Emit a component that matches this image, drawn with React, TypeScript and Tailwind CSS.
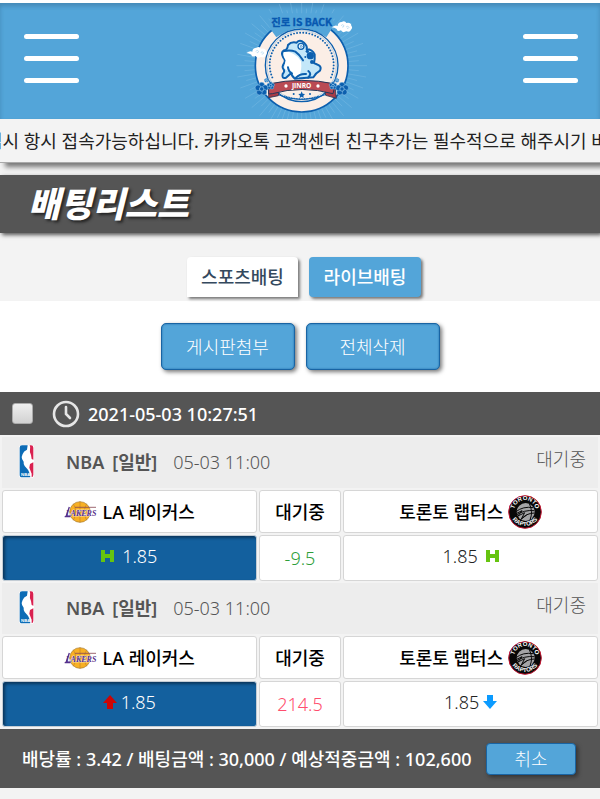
import React from "react";

const RAYS = Array.from({ length: 72 }, (_, i) => (i * Math.PI) / 36);
const DOTS = Array.from({ length: 42 }, (_, i) => Math.PI * 0.87 + (i * Math.PI * 1.26) / 41);

function Flower({ x, y, r }: { x: number; y: number; r: number }) {
  return (
    <g transform={`translate(${x} ${y})`}>
      {[0, 72, 144, 216, 288].map((a) => (
        <circle
          key={a}
          r={r * 0.46}
          cx={Math.sin((a * Math.PI) / 180) * r * 0.6}
          cy={-Math.cos((a * Math.PI) / 180) * r * 0.6}
          fill="#0c5fae"
          stroke="#8cc4e8"
          strokeWidth="1.5"
        />
      ))}
      <circle r={r * 0.35} fill="#0c5fae" stroke="#9fd0ee" strokeWidth="2" />
    </g>
  );
}

function Cloud({ x, y }: { x: number; y: number }) {
  return (
    <g transform={`translate(${x} ${y})`}>
      <path
        d="M0 18 Q12 10 18 14 Q18 3 30 2 Q40 -3 44 5 Q58 2 59 13 Q64 18 58 25 Q55 34 44 30 Q32 36 28 27 Q16 32 15 23 Q8 18 0 18Z"
        fill="#fff"
      />
      <path d="M28 13 q5 -6 9 0 q-1 6 -6 4 M43 17 q6 -6 9 1 q-2 5 -6 3" fill="none" stroke="#8cc4e8" strokeWidth="1.5" />
    </g>
  );
}

function BrandLogo() {
  return (
    <svg width="140" height="116" viewBox="0 9 420 348" role="img" aria-label="진로 IS BACK">
      <g stroke="#8ac4ea" strokeWidth="1.8" opacity="0.6">
        {RAYS.map((a, i) => {
          const r = i % 2 ? 172 : 196;
          return (
            <line
              key={i}
              x1={212 + Math.cos(a) * 135}
              y1={197 + Math.sin(a) * 135}
              x2={212 + Math.cos(a) * r}
              y2={197 + Math.sin(a) * r}
            />
          );
        })}
      </g>
      <circle cx="212" cy="197" r="139" fill="#fbeee6" stroke="#0c5fae" strokeWidth="5" />
      <path d="M116 40H306V80L286 112Q212 58 136 112L116 84Z" fill="#53a5d9" />
      <circle cx="212" cy="196" r="109" fill="#fbeee6" stroke="#0c5fae" strokeWidth="4" />
      <circle cx="212" cy="196" r="104" fill="none" stroke="#7fb4dc" strokeWidth="1.5" />
      {DOTS.map((a, i) => (
        <circle key={i} cx={212 + Math.cos(a) * 96} cy={194 + Math.sin(a) * 96} r="2.9" fill="#0c5fae" />
      ))}
      <text
        x="212"
        y="79"
        fill="#0758b0"
        stroke="#0758b0"
        strokeWidth="1"
        fontSize="31"
        fontWeight="700"
        textAnchor="middle"
        fontFamily="'Liberation Sans Narrow','Noto Sans CJK KR',sans-serif"
      >
        진로 IS BACK
      </text>
      <Cloud x={302} y={64} />
      <Cloud x={46} y={141} />
      <path
        d="M171 135 Q181 124 197 128 Q206 117 219 128 Q230 138 227 148 Q244 148 251 163 Q252 178 249 189 L264 196 Q272 201 267 212 Q253 220 247 232 L191 236 Q183 228 180 220 L165 233 Q151 237 155 222 Q163 213 157 207 Q152 200 159 190 Q165 182 157 173 Q148 158 159 151 Q169 151 171 135Z"
        fill="#c3e7f9"
        stroke="#0c5fae"
        strokeWidth="6"
        strokeLinejoin="round"
      />
      <path d="M160 154 Q154 167 164 181 Q160 196 160 205 Q172 218 183 213 Q186 231 202 233 Q214 214 210 184 Q196 158 160 154Z" fill="#fff" />
      <path
        d="M160 153 Q178 149 193 155 Q205 163 216 181 M171 202 Q173 216 183 220 M195 233 Q208 220 225 222 M231 233 Q244 222 232 213"
        fill="none"
        stroke="#0c5fae"
        strokeWidth="6"
        strokeLinecap="round"
      />
      <circle cx="210" cy="139" r="9" fill="#e8f7fe" stroke="#0c5fae" strokeWidth="4" />
      <path d="M207 139 q4 -5 7 0 q-3 5 -6 2" fill="none" stroke="#0c5fae" strokeWidth="2" />
      <g fill="#0c5fae">
        <circle cx="238" cy="167" r="11" />
        <circle cx="229" cy="154" r="5" />
        <circle cx="243" cy="186" r="6" />
        <circle cx="223" cy="171" r="3" />
      </g>
      <path d="M135 282 Q212 315 289 282" fill="none" stroke="#0c5fae" strokeWidth="3" />
      <path d="M113 256 L113 293 L142 287 L146 256Z M312 256 L316 295 L284 286 L280 256Z" fill="#a93c46" stroke="#26375a" strokeWidth="2.5" />
      <path d="M113 252 Q212 230 313 252 L306 281 Q212 256 124 281 L113 282Z" fill="#ba4a53" stroke="#26375a" strokeWidth="3" />
      <path d="M160 288 Q212 306 264 288" fill="none" stroke="#0c5fae" strokeWidth="4" strokeDasharray="3 2" />
      <g fill="#0c5fae">
        <path d="M212 274 l3 7 7 1 -5 5 1 7 -6 -4 -6 4 1 -7 -5 -5 7 -1z" />
        <circle cx="188" cy="282" r="3" />
        <circle cx="237" cy="282" r="3" />
      </g>
      <text x="212" y="263" fill="#fff" fontSize="20" fontWeight="700" textAnchor="middle" fontFamily="'Open Sans','Noto Sans',sans-serif">
        JINRO
      </text>
      <circle cx="165" cy="258" r="5" fill="#fff" />
      <circle cx="261" cy="258" r="5" fill="#fff" />
      <Flower x={92} y={267} r={19} />
      <Flower x={119} y={257} r={11} />
      <Flower x={106} y={241} r={6} />
      <Flower x={333} y={267} r={19} />
      <Flower x={306} y={257} r={11} />
      <Flower x={318} y={241} r={6} />
    </svg>
  );
}

function NbaLogo() {
  return (
    <svg className="shrink-0" width="15" height="33" viewBox="0 0 45 99" role="img" aria-label="NBA">
      <rect width="45" height="99" rx="8" fill="#fff" />
      <path d="M9 1H26L24 14Q14 18 11 27L8 36Q8 44 14 50Q13 57 17 63L25 72Q32 80 34 97H9Q2 97 2 89V8Q2 1 9 1Z" fill="#0d6cb6" />
      <path d="M32 1H36Q43 1 43 8V44L38 42L36 30Q31 21 33 14Q35 7 32 1Z M33 57L43 52V89Q43 96 38 97L38 86L31 68Z" fill="#d9204f" />
      <text x="6" y="93" fill="#fff" fontSize="13" fontWeight="900" fontFamily="'Liberation Sans',sans-serif">
        NBA
      </text>
    </svg>
  );
}

function LakersLogo() {
  return (
    <svg className="shrink-0" width="34" height="22" viewBox="0 0 102 66" role="img" aria-label="Lakers">
      <circle cx="48" cy="33" r="31" fill="#f8b024" stroke="#a77b35" strokeWidth="2" />
      <path d="M48 1V65M28 8Q42 33 28 58M68 8Q54 33 68 58M17 33H79" fill="none" stroke="#b57a2a" strokeWidth="1.6" />
      <text
        x="51"
        y="44"
        textAnchor="middle"
        fill="#56308c"
        stroke="#fff"
        strokeWidth="2"
        paintOrder="stroke"
        fontSize="24"
        fontWeight="700"
        fontStyle="italic"
        fontFamily="'Liberation Serif',serif"
      >
        LAKERS
      </text>
      <path d="M2 47H20M16 18L6 47" stroke="#56308c" strokeWidth="4" />
      <path d="M34 19H96" stroke="#8a4a55" strokeWidth="4" strokeDasharray="4 2" />
    </svg>
  );
}

function RaptorsLogo() {
  return (
    <svg className="shrink-0" width="34" height="34" viewBox="0 0 102 102" role="img" aria-label="Raptors">
      <circle cx="51" cy="51" r="49" fill="#080808" stroke="#c41632" strokeWidth="3" />
      <path id="arcTop" d="M19 57A33 33 0 1 1 83 57" fill="none" />
      <path id="arcBottom" d="M5 47A46 46 0 0 0 97 47" fill="none" />
      <g fill="#fff" fontSize="18" fontWeight="900" fontFamily="'Liberation Sans',sans-serif" textAnchor="middle">
        <text>
          <textPath href="#arcTop" startOffset="50%">
            TORONTO
          </textPath>
        </text>
        <text>
          <textPath href="#arcBottom" startOffset="50%">
            RAPTORS
          </textPath>
        </text>
      </g>
      <circle cx="53" cy="51" r="27" fill="#a4a4a6" />
      <path d="M24 50Q45 33 76 38M25 60Q48 44 79 47M38 74Q55 54 80 54M64 26Q76 50 66 75" fill="none" stroke="#080808" strokeWidth="3" />
      <path d="M22 57L42 47L30 63L50 53L40 72L56 60" fill="none" stroke="#080808" strokeWidth="3" />
    </svg>
  );
}

function HandicapIcon() {
  return (
    <svg className="shrink-0" width="13" height="12" viewBox="0 0 13 12" aria-hidden="true">
      <path d="M0 0H4V4H9V0H13V12H9V8H4V12H0Z" fill="#66c410" />
    </svg>
  );
}

function ArrowIcon({ down }: { down?: boolean }) {
  return (
    <svg className="shrink-0" width="14" height="14" viewBox="0 0 14 14" aria-hidden="true">
      {down ? (
        <path d="M4 0H10V6H14L7 14L0 6H4Z" fill="#0b9bff" />
      ) : (
        <path d="M4 14H10V8H14L7 0L0 8H4Z" fill="#cc0505" />
      )}
    </svg>
  );
}

function ClockIcon() {
  return (
    <svg width="28" height="28" viewBox="0 0 28 28" aria-hidden="true" fill="none" stroke="#e6e6e6" strokeLinecap="round">
      <circle cx="14" cy="14" r="12" strokeWidth="2.6" />
      <path d="M14 7V14L18 18" strokeWidth="2.6" />
    </svg>
  );
}

function MenuButton({ label }: { label: string }) {
  return (
    <button type="button" aria-label={label} className="flex w-[55px] flex-col gap-[17px] pb-[6px]">
      <span className="h-[5px] rounded-full bg-white" />
      <span className="h-[5px] rounded-full bg-white" />
      <span className="h-[5px] rounded-full bg-white" />
    </button>
  );
}

type Match = {
  line: string;
  lineClass: string;
  home: React.ReactNode;
  away: React.ReactNode;
};

const MATCHES: Match[] = [
  {
    line: "-9.5",
    lineClass: "text-[#2e9e3a]",
    home: (
      <span className="flex items-center justify-center gap-2 pb-1">
        <HandicapIcon />
        1.85
      </span>
    ),
    away: (
      <span className="flex items-center justify-center gap-2 pb-1">
        1.85
        <HandicapIcon />
      </span>
    ),
  },
  {
    line: "214.5",
    lineClass: "text-[#ff4d6d]",
    home: (
      <span className="flex items-center justify-center gap-1 pb-1">
        <ArrowIcon />
        1.85
      </span>
    ),
    away: (
      <span className="flex items-center justify-center gap-1 pb-1">
        1.85
        <ArrowIcon down />
      </span>
    ),
  },
];

const cell = "rounded-[3px] border border-[#d6d6d6] bg-white p-0 text-center";

function MatchRows({ match }: { match: Match }) {
  return (
    <tbody>
      <tr>
        <td colSpan={3} className="h-[51px] bg-[#ededed] p-0">
          <div className="flex items-center pr-3 pb-[2px] pl-[17px] text-[#555]">
            <NbaLogo />
            <strong className="ml-8 font-semibold">NBA</strong>
            <strong className="ml-2 font-semibold">[일반]</strong>
            <span className="ml-4 font-light">05-03 11:00</span>
            <span className="mb-[6px] ml-auto font-light">대기중</span>
          </div>
        </td>
      </tr>
      <tr className="text-black">
        <th scope="col" className={`${cell} h-[43px] font-medium`}>
          <span className="flex items-center justify-center gap-[5px]">
            <LakersLogo />
            LA 레이커스
          </span>
        </th>
        <th scope="col" className={`${cell} font-medium`}>
          대기중
        </th>
        <th scope="col" className={`${cell} font-medium`}>
          <span className="flex items-center justify-center gap-[5px]">
            토론토 랩터스
            <RaptorsLogo />
          </span>
        </th>
      </tr>
      <tr className="font-light">
        <td className="h-[46px] rounded-[3px] border border-[#c3ccd4] bg-[#13609e] p-0 text-center text-white shadow-[inset_2px_2px_3px_#0b365c]">
          {match.home}
        </td>
        <td className={`${cell} ${match.lineClass}`}>{match.line}</td>
        <td className={cell}>{match.away}</td>
      </tr>
    </tbody>
  );
}

export default function App() {
  return (
    <div className="min-h-screen bg-[#f3f3f3] font-['Noto_Sans','Noto_Sans_CJK_KR',sans-serif] text-[18px] leading-6 text-[#222]">
      <header className="flex h-[119px] items-center justify-between border-t-[3px] border-white bg-[#53a5d9] pr-[22px] pl-6 shadow-[inset_0_3px_4px_#4489b6]">
        <MenuButton label="왼쪽 메뉴" />
        <BrandLogo />
        <MenuButton label="오른쪽 메뉴" />
      </header>

      <div className="overflow-hidden pb-3">
        <div className="flex h-[44px] items-center border-b border-[#aaa] shadow-[5px_4px_5px_#777]">
          <div className="w-full overflow-hidden">
            <p className="-ml-[14px] whitespace-nowrap">검시 항시 접속가능하십니다. 카카오톡 고객센터 친구추가는 필수적으로 해주시기 바랍니다.</p>
          </div>
        </div>
      </div>

      <div className="flex h-[58px] items-center bg-[#555] pl-7 shadow-[2px_2px_4px_#555]">
        <h1 className="text-[35px] leading-10 font-black text-white italic [text-shadow:2px_2px_3px_#222]">배팅리스트</h1>
      </div>

      <nav className="flex h-[68px] items-start justify-center gap-[11px] pt-6 pl-2 font-medium">
        <button type="button" className="h-[40px] w-[111px] rounded-t-[4px] bg-white text-[#34495e] shadow-[2px_2px_3px_#777]">
          스포츠배팅
        </button>
        <button type="button" className="h-[40px] w-[112px] rounded-[4px] bg-[#53a5d9] text-white shadow-[2px_2px_3px_#777]">
          라이브배팅
        </button>
      </nav>

      <div className="flex justify-center gap-[11px] bg-white py-[22px] font-light">
        <button type="button" className="h-[47px] w-[134px] rounded-[5px] border border-[#1964a3] bg-[#53a5d9] text-white shadow-[2px_2px_4px_#777,inset_0_0_2px_#1964a3]">
          게시판첨부
        </button>
        <button type="button" className="h-[47px] w-[134px] rounded-[5px] border border-[#1964a3] bg-[#53a5d9] text-white shadow-[2px_2px_4px_#777,inset_0_0_2px_#1964a3]">
          전체삭제
        </button>
      </div>

      <main>
        <div className="flex h-[43px] items-center bg-[#555] pl-3 text-white">
          <input
            id="slip"
            type="checkbox"
            className="h-[21px] w-[21px] appearance-none rounded-[3px] border border-[#aaa] bg-linear-to-b from-[#eee] to-[#d2d2d2] checked:from-[#53a5d9] checked:to-[#13609e]"
          />
          <label htmlFor="slip" className="ml-[19px] flex items-center gap-2 font-medium">
            <ClockIcon />
            2021-05-03 10:27:51
          </label>
        </div>

        <table className="w-full table-fixed border-separate border-spacing-[2px]">
          <colgroup>
            <col className="w-[43%]" />
            <col className="w-[14%]" />
            <col className="w-[43%]" />
          </colgroup>
          {MATCHES.map((m) => (
            <MatchRows key={m.line} match={m} />
          ))}
        </table>

        <footer className="flex h-[59px] items-center justify-between bg-[#555] pr-6 pl-[22px] whitespace-nowrap text-white">
          <p className="font-medium">배당률 : 3.42 / 배팅금액 : 30,000 / 예상적중금액 : 102,600</p>
          <button type="button" className="h-8 w-[90px] shrink-0 rounded-[4px] border border-[#1964a3] bg-[#53a5d9] font-light shadow-[2px_2px_4px_#333]">
            취소
          </button>
        </footer>
      </main>
    </div>
  );
}
